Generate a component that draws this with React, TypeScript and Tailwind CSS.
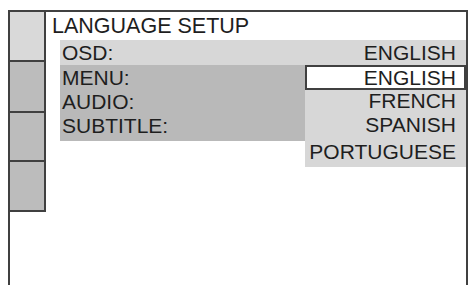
export default function App() {
  const side = [
    { h: 'h-[50px]', bg: 'bg-[#d9d9d9]' },
    { h: 'h-[51px]', bg: 'bg-[#bcbcbc]' },
    { h: 'h-[49px]', bg: 'bg-[#bcbcbc]' },
    { h: 'h-[50px]', bg: 'bg-[#bcbcbc]' },
  ];

  return (
    <div
      className="w-[473px] h-[285px] bg-white pt-[10px] pl-[8px] pr-[5px] overflow-hidden text-[#1e1e1e]"
      style={{ fontFamily: '"Liberation Sans", Arial, sans-serif' }}
    >
      <div className="flex h-full border-l-2 border-t-2 border-r-2 border-[#404040]">
        {/* sidebar tabs */}
        <div className="flex w-[36px] flex-col">
          {side.map((c, i) => (
            <div key={i} className={`${c.h} ${c.bg} border-b-2 border-r-2 border-[#404040]`} />
          ))}
        </div>

        {/* main panel */}
        <div className="relative flex-1 text-[21px] leading-none">
          <div className="h-[28px] pl-[6px] pt-[2px] text-[21.5px] leading-[24px]">LANGUAGE SETUP</div>

          <div className="ml-[14px] flex h-[25px] items-center justify-between bg-[#d7d7d7] pl-[2px] pr-[10px]">
            <span>OSD:</span>
            <span>ENGLISH</span>
          </div>

          <div className="ml-[14px] h-[76px] w-[245px] bg-[#b9b9b9] pl-[2px] pt-[1px]">
            <div className="h-[24px] leading-[24px]">MENU:</div>
            <div className="h-[24px] leading-[24px]">AUDIO:</div>
            <div className="h-[24px] leading-[24px]">SUBTITLE:</div>
          </div>

          {/* language dropdown */}
          <div className="absolute left-[259px] top-[53px] right-0 h-[102px] bg-[#d7d7d7] text-right">
            <div className="h-[25px] border-2 border-[#404040] bg-white pr-[8px] leading-[21px]">ENGLISH</div>
            <div className="h-[22px] pr-[10px] leading-[22px]">FRENCH</div>
            <div className="h-[25px] pr-[10px] leading-[26px]">SPANISH</div>
            <div className="h-[30px] pr-[10px] leading-[30px]">PORTUGUESE</div>
          </div>
        </div>
      </div>
    </div>
  );
}
